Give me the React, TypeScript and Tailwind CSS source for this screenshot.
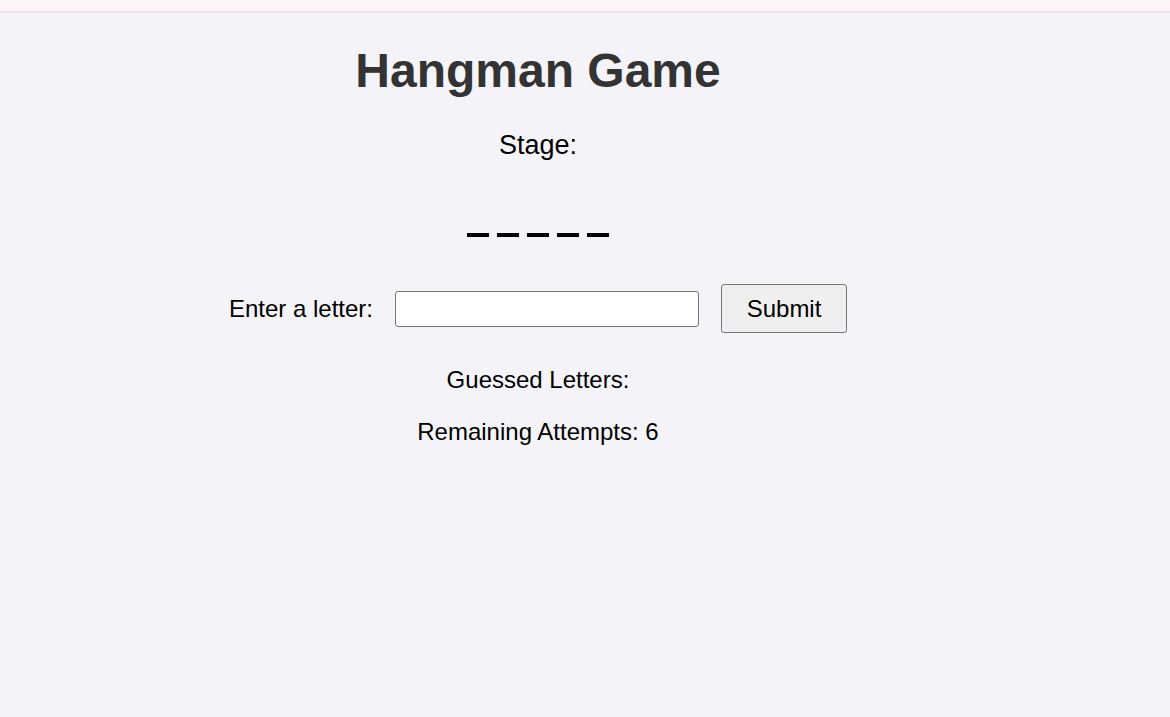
import React from "react";

export default function App() {
  return (
    <div
      className="min-h-[717px] w-full bg-[#f4f4f8] text-black"
      style={{ fontFamily: '"Liberation Sans", Arial, sans-serif' }}
    >
      <div className="h-[11px] bg-[#fff4f8] border-b-2 border-[#f2dde8] box-content" />
      <div className="w-[1076px] flex flex-col items-center text-center">
        <h1 className="mt-[30px] text-[48px] leading-[55px] font-bold text-[#333333]">
          Hangman Game
        </h1>
        <p className="mt-[32px] text-[27px] leading-[31px]">Stage:</p>
        <div className="mt-[72px] flex gap-[8px] h-[4px]">
          {[0, 1, 2, 3, 4].map((i) => (
            <div key={i} className="w-[22px] h-[4px] bg-black" />
          ))}
        </div>
        <div className="mt-[47px] flex items-center gap-[22px]">
          <label className="text-[24px] leading-[28px]">Enter a letter:</label>
          <input
            type="text"
            className="w-[304px] h-[36px] bg-white border border-[#767676] rounded-[3px] px-2 text-[20px] outline-none"
          />
          <button className="w-[126px] h-[49px] bg-[#efefef] border border-[#767676] rounded-[3px] text-[24px] leading-[28px]">
            Submit
          </button>
        </div>
        <p className="mt-[33px] text-[24px] leading-[28px]">Guessed Letters:</p>
        <p className="mt-[24px] text-[24px] leading-[28px]">Remaining Attempts: 6</p>
      </div>
    </div>
  );
}
